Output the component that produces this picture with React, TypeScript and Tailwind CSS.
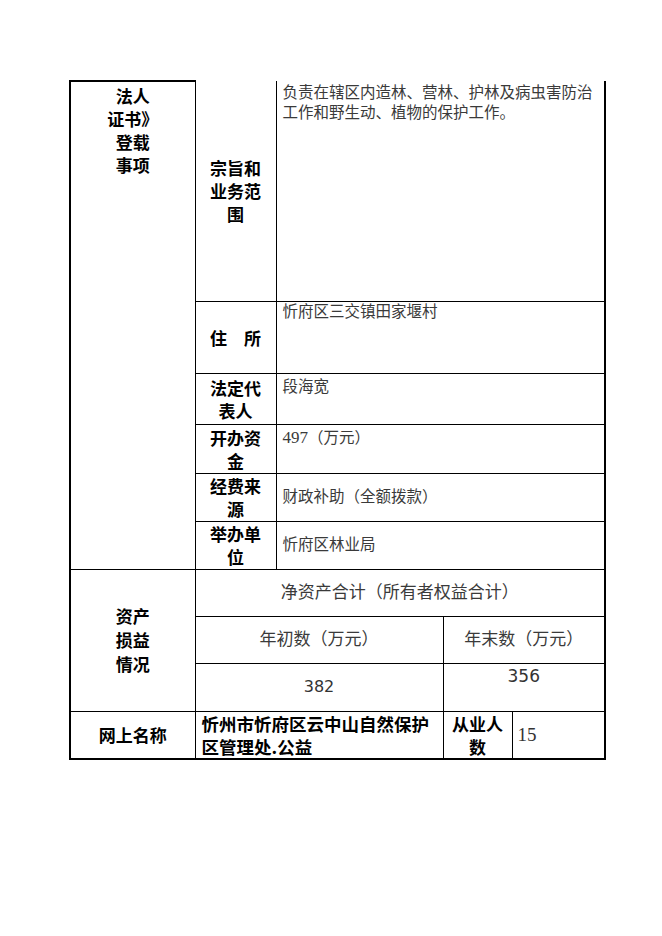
const label = "font-['Noto_Sans_CJK_SC',sans-serif] font-bold text-black text-[17px] leading-[23px] text-center";
const val = "font-['Liberation_Serif','Noto_Sans_CJK_SC',serif] text-[#3a3a3a] text-[15.5px] leading-[20px] text-left pl-[6px] pr-1";
const mid = "font-['Liberation_Serif','Noto_Sans_CJK_SC',serif] text-[#3a3a3a] text-[17px] leading-[24px] text-center";

const App = () => {
  return (
    <div className="w-[662px] h-[936px] bg-white pt-[80px] pl-[69px]">
      <table className="border-collapse table-fixed w-[535px]">
        <colgroup>
          <col className="w-[125px]" />
          <col className="w-[81px]" />
          <col className="w-[167px]" />
          <col className="w-[69px]" />
          <col className="w-[93px]" />
        </colgroup>
        <tbody>
          <tr className="h-[220px]">
            <td rowSpan={6} className={`${label} align-top pt-[2px] border-t-2 border-l-2 border-r border-b border-black`}>
              法人<br />证书》<br />登载<br />事项
            </td>
            <td className={`${label} align-middle border-r border-b border-black`}>
              宗旨和<br />业务范<br />围
            </td>
            <td colSpan={3} className={`${val} align-top pt-[2px] border-r-2 border-b border-black`}>
              负责在辖区内造林、营林、护林及病虫害防治<br />工作和野生动、植物的保护工作。
            </td>
          </tr>
          <tr className="h-[72px]">
            <td className={`${label} align-middle border-r border-b border-black`}>住　所</td>
            <td colSpan={3} className={`${val} align-top pt-0 border-r-2 border-b border-black`}>忻府区三交镇田家堰村</td>
          </tr>
          <tr className="h-[51px]">
            <td className={`${label} align-middle border-r border-b border-black`}>法定代<br />表人</td>
            <td colSpan={3} className={`${val} align-top pt-[3px] border-r-2 border-b border-black`}>段海宽</td>
          </tr>
          <tr className="h-[49px]">
            <td className={`${label} align-middle border-r border-b border-black`}>开办资<br />金</td>
            <td colSpan={3} className={`${val} align-top pt-[3px] border-r-2 border-b border-black`}>
              <span className="text-[17px]">497</span>（万元）
            </td>
          </tr>
          <tr className="h-[48px]">
            <td className={`${label} align-middle border-r border-b border-black`}>经费来<br />源</td>
            <td colSpan={3} className={`${val} align-middle border-r-2 border-b border-black`}>财政补助（全额拨款）</td>
          </tr>
          <tr className="h-[48px]">
            <td className={`${label} align-middle border-r border-b border-black`}>举办单<br />位</td>
            <td colSpan={3} className={`${val} align-middle border-r-2 border-b border-black`}>忻府区林业局</td>
          </tr>
          <tr className="h-[47px]">
            <td rowSpan={3} className={`${label} leading-[24px] align-middle border-l-2 border-r border-b border-black`}>
              资产<br />损益<br />情况
            </td>
            <td colSpan={4} className={`${mid} align-middle border-r-2 border-b border-black`}>净资产合计（所有者权益合计）</td>
          </tr>
          <tr className="h-[47px]">
            <td colSpan={2} className={`${mid} align-middle border-r border-b border-black`}>年初数（万元）</td>
            <td colSpan={2} className={`${mid} align-middle border-r-2 border-b border-black`}>年末数（万元）</td>
          </tr>
          <tr className="h-[48px]">
            <td colSpan={2} className="font-['DejaVu_Sans',sans-serif] text-[16px] leading-[24px] text-[#333] text-center align-middle border-r border-b border-black">382</td>
            <td colSpan={2} className="font-['DejaVu_Sans',sans-serif] text-[17px] leading-[24px] text-[#333] text-center align-top border-r-2 border-b border-black">356</td>
          </tr>
          <tr className="h-[44px]">
            <td className={`${label} align-middle border-l-2 border-r border-b-2 border-black`}>网上名称</td>
            <td colSpan={2} className="font-['Noto_Sans_CJK_SC',sans-serif] font-bold text-black text-[17.5px] leading-[23px] text-left pl-[6px] py-0 align-middle border-r border-b-2 border-black">
              忻州市忻府区云中山自然保护<br />区管理处.公益
            </td>
            <td className={`${label} leading-[22px] py-0 align-middle border-r border-b-2 border-black`}>从业人<br />数</td>
            <td className="font-['Liberation_Serif',serif] text-[19px] leading-[24px] text-[#333] text-left pl-[5px] align-middle border-r-2 border-b-2 border-black">15</td>
          </tr>
        </tbody>
      </table>
    </div>
  );
};

export default App;
